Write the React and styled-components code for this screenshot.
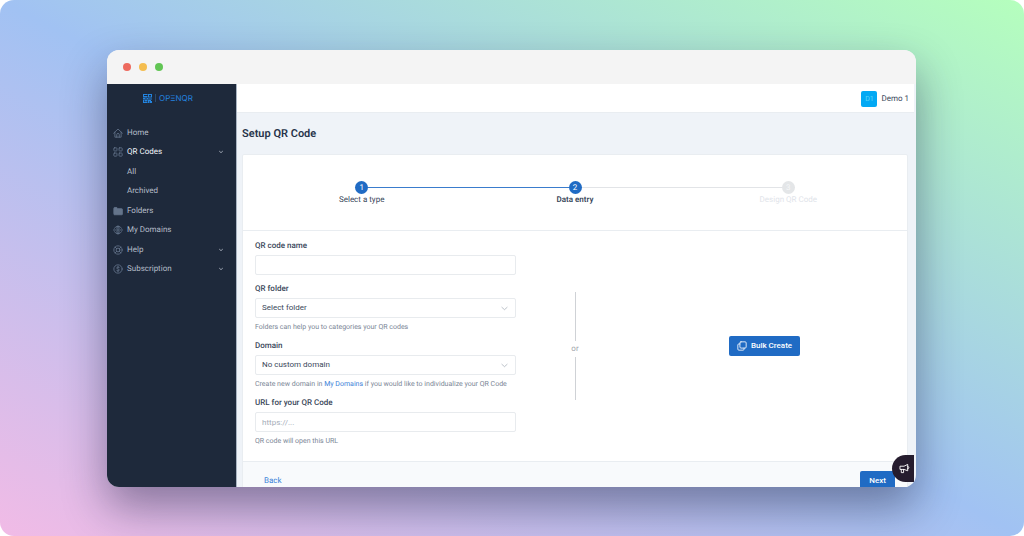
import React from 'react';
import styled, { createGlobalStyle } from 'styled-components';

const GlobalStyle = createGlobalStyle`
  :root {
    --navy: #1e293b;
    --blue: #206bc4;
    --link: #3b82d8;
    --text: #3a475a;
    --muted: #7b8696;
    --line: #e9edf1;
    --canvas: #eff3f8;
    --fz-xs: 7px;
    --fz-sm: 8px;
    --fz-lg: 11px;
  }

  * {
    box-sizing: border-box;
  }

  body {
    margin: 0;
    background: #fff;
    color: var(--text);
    font-family: Roboto, 'Liberation Sans', sans-serif;
    font-size: var(--fz-sm);
    line-height: 10px;
    text-rendering: geometricPrecision;
  }

  button,
  input,
  select {
    margin: 0;
    font: inherit;
  }

  a {
    color: var(--link);
    text-decoration: none;
  }
`;

const StyledStage = styled.div`
  display: flex;
  height: 100vh;
  padding: 50px 108px 49px 107px;
  border-radius: 14px;
  background: linear-gradient(to top right, #f1bbe6, #a1c2f3 50%, #b5ffbd);
`;

const StyledWindow = styled.div`
  position: relative;
  display: flex;
  flex: 1;
  flex-direction: column;
  min-width: 0;
  overflow: hidden;
  border-radius: 12px;
  background: var(--canvas);
  box-shadow: 0 20px 44px rgba(20, 20, 50, 0.42);
`;

const StyledTitleBar = styled.div`
  display: flex;
  flex-shrink: 0;
  align-items: center;
  gap: 8px;
  height: 34px;
  padding: 0 16px;
  background: #f4f4f4;
`;

const StyledDot = styled.span`
  width: 8px;
  height: 8px;
  border-radius: 50%;
  background: ${({ $color }) => $color};
`;

const StyledBody = styled.div`
  display: flex;
  flex: 1;
  min-height: 0;
  padding-right: 2px;
`;

const StyledSidebar = styled.aside`
  flex: 0 0 130px;
  padding: 0 13px 0 6px;
  border-right: 1px solid #a9b4c2;
  background: var(--navy);
`;

const StyledLogo = styled.a`
  display: flex;
  align-items: center;
  justify-content: center;
  gap: 3px;
  height: 28px;
  color: #2384e0;
  font-family: Inter, sans-serif;

  i {
    width: 1px;
    height: 8px;
    background: #2b4a6c;
  }
`;

const StyledMenu = styled.nav`
  display: grid;
  grid-auto-rows: 1fr;
  height: 156px;
  margin-top: 11px;
`;

const StyledMenuItem = styled.a`
  display: flex;
  align-items: center;
  gap: 4px;
  color: ${({ $active }) => ($active ? '#f1f5f9' : '#b4bcc8')};

  svg {
    color: #64748b;
  }

  .label {
    flex: 1;
  }

  .chevron {
    color: #b4bcc8;
  }
`;

const StyledIconSlot = styled.span`
  display: flex;
  width: 10px;
  height: 10px;
`;

const StyledMain = styled.main`
  display: flex;
  flex: 1;
  flex-direction: column;
  min-width: 0;
`;

const StyledTopBar = styled.header`
  display: flex;
  flex-shrink: 0;
  align-items: center;
  justify-content: flex-end;
  gap: 4px;
  height: 29px;
  padding: 1px 5px 0 0;
  border-bottom: 1px solid var(--line);
  background: #fff;
`;

const StyledAvatar = styled.span`
  width: 16px;
  height: 16px;
  border-radius: 2px;
  background: #03a9f4;
  color: #5fd6f5;
  font-size: var(--fz-xs);
  line-height: 16px;
  text-align: center;
`;

const StyledContent = styled.div`
  padding: 13px 6px 0 5px;

  h1 {
    margin: 0 0 12px;
    color: #27344a;
    font-size: var(--fz-lg);
    font-weight: 600;
    line-height: 16px;
  }
`;

const StyledCard = styled.section`
  border: 1px solid var(--line);
  border-radius: 2px;
  background: #fff;
`;

const StyledSteps = styled.ol`
  display: grid;
  grid-template-columns: repeat(3, 1fr);
  margin: 0;
  padding: 26px 12px 25px;
  border-bottom: 1px solid var(--line);
  list-style: none;
`;

const StyledStep = styled.li`
  color: ${({ $state }) => ($state === 'todo' ? '#dfe4ea' : 'var(--text)')};
  font-weight: ${({ $state }) => ($state === 'current' ? 600 : 400)};
  text-align: center;

  .track {
    display: flex;
    align-items: center;
    margin-bottom: 1px;
  }
`;

const StyledTrack = styled.span`
  flex: 1;
  height: 1px;
  background: ${({ $tone }) =>
    ({ done: '#3a7ccd', todo: '#e2e4e7', none: 'transparent' })[$tone]};
`;

const StyledStepNumber = styled.span`
  width: 13px;
  height: 13px;
  border-radius: 50%;
  background: ${({ $state }) => ($state === 'todo' ? '#e4e6e8' : 'var(--blue)')};
  color: ${({ $state }) => ($state === 'todo' ? '#f6f7f8' : '#fff')};
  font-weight: 400;
  line-height: 13px;
`;

const StyledForm = styled.form`
  display: grid;
  grid-template-columns: 1fr 118px 1fr;
  align-items: center;
  padding: 10px 12px 15px;
`;

const StyledFields = styled.div`
  display: flex;
  flex-direction: column;
  gap: 9px;
`;

const StyledField = styled.div`
  display: flex;
  flex-direction: column;

  label {
    margin-bottom: 4px;
    font-weight: 500;
  }

  input,
  select {
    width: 100%;
    height: 20px;
    padding: 0 6px;
    border: 1px solid #e8ebee;
    border-radius: 2px;
    outline: none;
    appearance: none;
    background: #fff;
    color: var(--text);
  }

  input::placeholder {
    color: #a5adb8;
    opacity: 1;
  }

  small {
    margin-top: 4px;
    color: var(--muted);
    font-size: var(--fz-xs);
  }
`;

const StyledSelectBox = styled.div`
  display: grid;
  align-items: center;

  > * {
    grid-area: 1 / 1;
  }

  svg {
    justify-self: end;
    margin-right: 8px;
    color: #8d97a4;
    pointer-events: none;
  }
`;

const StyledDivider = styled.div`
  display: flex;
  flex-direction: column;
  align-items: center;
  padding-top: 4px;
  color: #a3a7ad;
  line-height: 16px;
`;

const StyledRule = styled.span`
  width: 1px;
  height: ${({ $length }) => $length}px;
  background: #cfd2d6;
`;

const StyledBulk = styled.div`
  display: flex;
  justify-content: center;
  padding-top: 4px;
`;

const StyledButton = styled.button`
  display: flex;
  align-items: center;
  justify-content: center;
  gap: 4px;
  height: 20px;
  padding: 0 ${({ $wide }) => ($wide ? 8 : 9)}px;
  border: 0;
  border-radius: 2px;
  background: var(--blue);
  color: #fff;
  font-weight: 500;
`;

const StyledFooter = styled.footer`
  display: flex;
  align-items: center;
  justify-content: space-between;
  padding: 9px 12px 9px 21px;
  border-top: 1px solid var(--line);
  background: #f8fafc;
`;

// Floating feedback tab, pinned over the window's right edge
const StyledFeedback = styled.button`
  position: absolute;
  right: 2px;
  bottom: 5px;
  display: flex;
  align-items: center;
  justify-content: center;
  width: 22px;
  height: 27px;
  padding: 0 0 0 3px;
  border: 0;
  border-radius: 14px 0 0 14px;
  background: #251c2e;
  color: #fff;
`;

const Icon = ({ size = 10, box = 24, width = 2, children, ...rest }) => (
  <svg
    width={size}
    height={size}
    viewBox={`0 0 ${box} ${box}`}
    fill="none"
    stroke="currentColor"
    strokeWidth={width}
    strokeLinecap="round"
    strokeLinejoin="round"
    aria-hidden="true"
    {...rest}
  >
    {children}
  </svg>
);

const icons = {
  home: (
    <Icon>
      <path d="M1.5 12.5 12 2.5l10.500 10M4.500 10v12h15V10M9 22v-6a3 3 0 0 1 6 0v6" />
    </Icon>
  ),
  codes: (
    <Icon>
      <rect x="2" y="2" width="7.500" height="7.500" rx="1.500" />
      <rect x="14.500" y="2" width="7.500" height="7.500" rx="1.500" />
      <rect x="2" y="14.500" width="7.500" height="7.500" rx="1.500" />
      <rect x="14.500" y="14.500" width="7.500" height="7.500" rx="1.500" />
    </Icon>
  ),
  folder: (
    <Icon>
      <path
        d="M2 5a1.500 1.500 0 0 1 1.500-1.500H9L12 6.500h9A1.500 1.500 0 0 1 22.500 8v11.500A1.500 1.500 0 0 1 21 21H3.500A1.500 1.500 0 0 1 2 19.500z"
        fill="currentColor"
      />
    </Icon>
  ),
  globe: (
    <Icon>
      <path d="M3.500 8a9.500 9.500 0 0 1 17 0M3.500 16a9.500 9.500 0 0 0 17 0M1 12h22M12 2.500v19M9 8c.5-3 1.500-5 3-5.500 1.500.5 2.500 2.500 3 5.500M9 16c.5 3 1.500 5 3 5.500 1.500-.5 2.500-2.500 3-5.500" />
    </Icon>
  ),
  help: (
    <Icon>
      <circle cx="12" cy="12" r="10" />
      <circle cx="12" cy="12" r="4.500" />
      <path d="m5 5 4 4M15 15l4 4M19 5l-4 4M9 15l-4 4" />
    </Icon>
  ),
  dollar: (
    <Icon>
      <circle cx="12" cy="12" r="10" />
      <path d="M15.500 9c-.5-1-1.500-1.500-3.500-1.500-4.500 0-4.500 4 0 4.500s4.500 4.500 0 4.500c-2 0-3-.5-3.500-1.500M12 5.500v2M12 16.500v2" />
    </Icon>
  ),
};

const Chevron = ({ size = 7, width = 3, ...rest }) => (
  <Icon size={size} width={width} {...rest}>
    <path d="m3 8 9 8 9-8" />
  </Icon>
);

const LogoMark = () => (
  <svg width="9" height="9" viewBox="0 0 18 18" fill="currentColor" aria-hidden="true">
    <path d="M0 0h9v2H2v2h7v3H0zM10 0h8v7h-2V2h-4v5h-2zM0 8h4v1h4V8h2v1h8v2H0zM13 4h2v4h-2zM0 12h2v4h7v2H0zM3 12h6v3H3zM10 12h6v2h-3v4h-3zM14 14h4v4h-4z" />
  </svg>
);

const menu = [
  { label: 'Home', icon: 'home' },
  { label: 'QR Codes', icon: 'codes', active: true, expands: true },
  { label: 'All' },
  { label: 'Archived' },
  { label: 'Folders', icon: 'folder' },
  { label: 'My Domains', icon: 'globe' },
  { label: 'Help', icon: 'help', expands: true },
  { label: 'Subscription', icon: 'dollar', expands: true },
];

const steps = [
  { label: 'Select a type', state: 'done', before: 'none', after: 'done' },
  { label: 'Data entry', state: 'current', before: 'done', after: 'todo' },
  { label: 'Design QR Code', state: 'todo', before: 'todo', after: 'none' },
];

const Sidebar = () => (
  <StyledSidebar>
    <StyledLogo href="#home">
      <LogoMark />
      <i />
      <span aria-label="OPENQR">OPΞNQR</span>
    </StyledLogo>
    <StyledMenu>
      {menu.map(({ label, icon, active, expands }) => (
        <StyledMenuItem key={label} href="#menu" $active={active}>
          <StyledIconSlot>{icons[icon]}</StyledIconSlot>
          <span className="label">{label}</span>
          {expands && <Chevron className="chevron" size={4} width={5} />}
        </StyledMenuItem>
      ))}
    </StyledMenu>
  </StyledSidebar>
);

const Steps = () => (
  <StyledSteps>
    {steps.map(({ label, state, before, after }, i) => (
      <StyledStep key={label} $state={state}>
        <div className="track">
          <StyledTrack $tone={before} />
          <StyledStepNumber $state={state}>{i + 1}</StyledStepNumber>
          <StyledTrack $tone={after} />
        </div>
        {label}
      </StyledStep>
    ))}
  </StyledSteps>
);

const SelectField = ({ id, label, option, children }) => (
  <StyledField>
    <label htmlFor={id}>{label}</label>
    <StyledSelectBox>
      <select id={id}>
        <option>{option}</option>
      </select>
      <Chevron width={2} />
    </StyledSelectBox>
    <small>{children}</small>
  </StyledField>
);

const App = () => (
  <>
    <GlobalStyle />
    <StyledStage>
      <StyledWindow>
        <StyledTitleBar>
          <StyledDot $color="#ed6a5e" />
          <StyledDot $color="#f4bd4f" />
          <StyledDot $color="#61c554" />
        </StyledTitleBar>
        <StyledBody>
          <Sidebar />
          <StyledMain>
            <StyledTopBar>
              <StyledAvatar>D1</StyledAvatar>
              <span>Demo 1</span>
            </StyledTopBar>
            <StyledContent>
              <h1>Setup QR Code</h1>
              <StyledCard>
                <Steps />
                <StyledForm>
                  <StyledFields>
                    <StyledField>
                      <label htmlFor="name">QR code name</label>
                      <input id="name" type="text" />
                    </StyledField>
                    <SelectField id="folder" label="QR folder" option="Select folder">
                      Folders can help you to categories your QR codes
                    </SelectField>
                    <SelectField id="domain" label="Domain" option="No custom domain">
                      Create new domain in <a href="#domains">My Domains</a> if you would like to
                      individualize your QR Code
                    </SelectField>
                    <StyledField>
                      <label htmlFor="url">URL for your QR Code</label>
                      <input id="url" type="text" placeholder="https://..." />
                      <small>QR code will open this URL</small>
                    </StyledField>
                  </StyledFields>
                  <StyledDivider>
                    <StyledRule $length={49} />
                    or
                    <StyledRule $length={43} />
                  </StyledDivider>
                  <StyledBulk>
                    <StyledButton type="button" $wide>
                      <Icon>
                        <rect x="7" y="2" width="15" height="15" rx="2.500" />
                        <path d="M7 7H4.500A2.500 2.500 0 0 0 2 9.500v10A2.500 2.500 0 0 0 4.500 22h10a2.500 2.500 0 0 0 2.500-2.500V17" />
                      </Icon>
                      Bulk Create
                    </StyledButton>
                  </StyledBulk>
                </StyledForm>
                <StyledFooter>
                  <a href="#back">Back</a>
                  <StyledButton type="button">Next</StyledButton>
                </StyledFooter>
              </StyledCard>
            </StyledContent>
          </StyledMain>
        </StyledBody>
        <StyledFeedback type="button" aria-label="Feedback">
          <Icon size={11}>
            <path d="M3 7h8l8-4v14l-8-3H3zM5 14v7h5v-7M19 7.500a2.500 2.500 0 0 1 0 5" />
          </Icon>
        </StyledFeedback>
      </StyledWindow>
    </StyledStage>
  </>
);

export default App;
